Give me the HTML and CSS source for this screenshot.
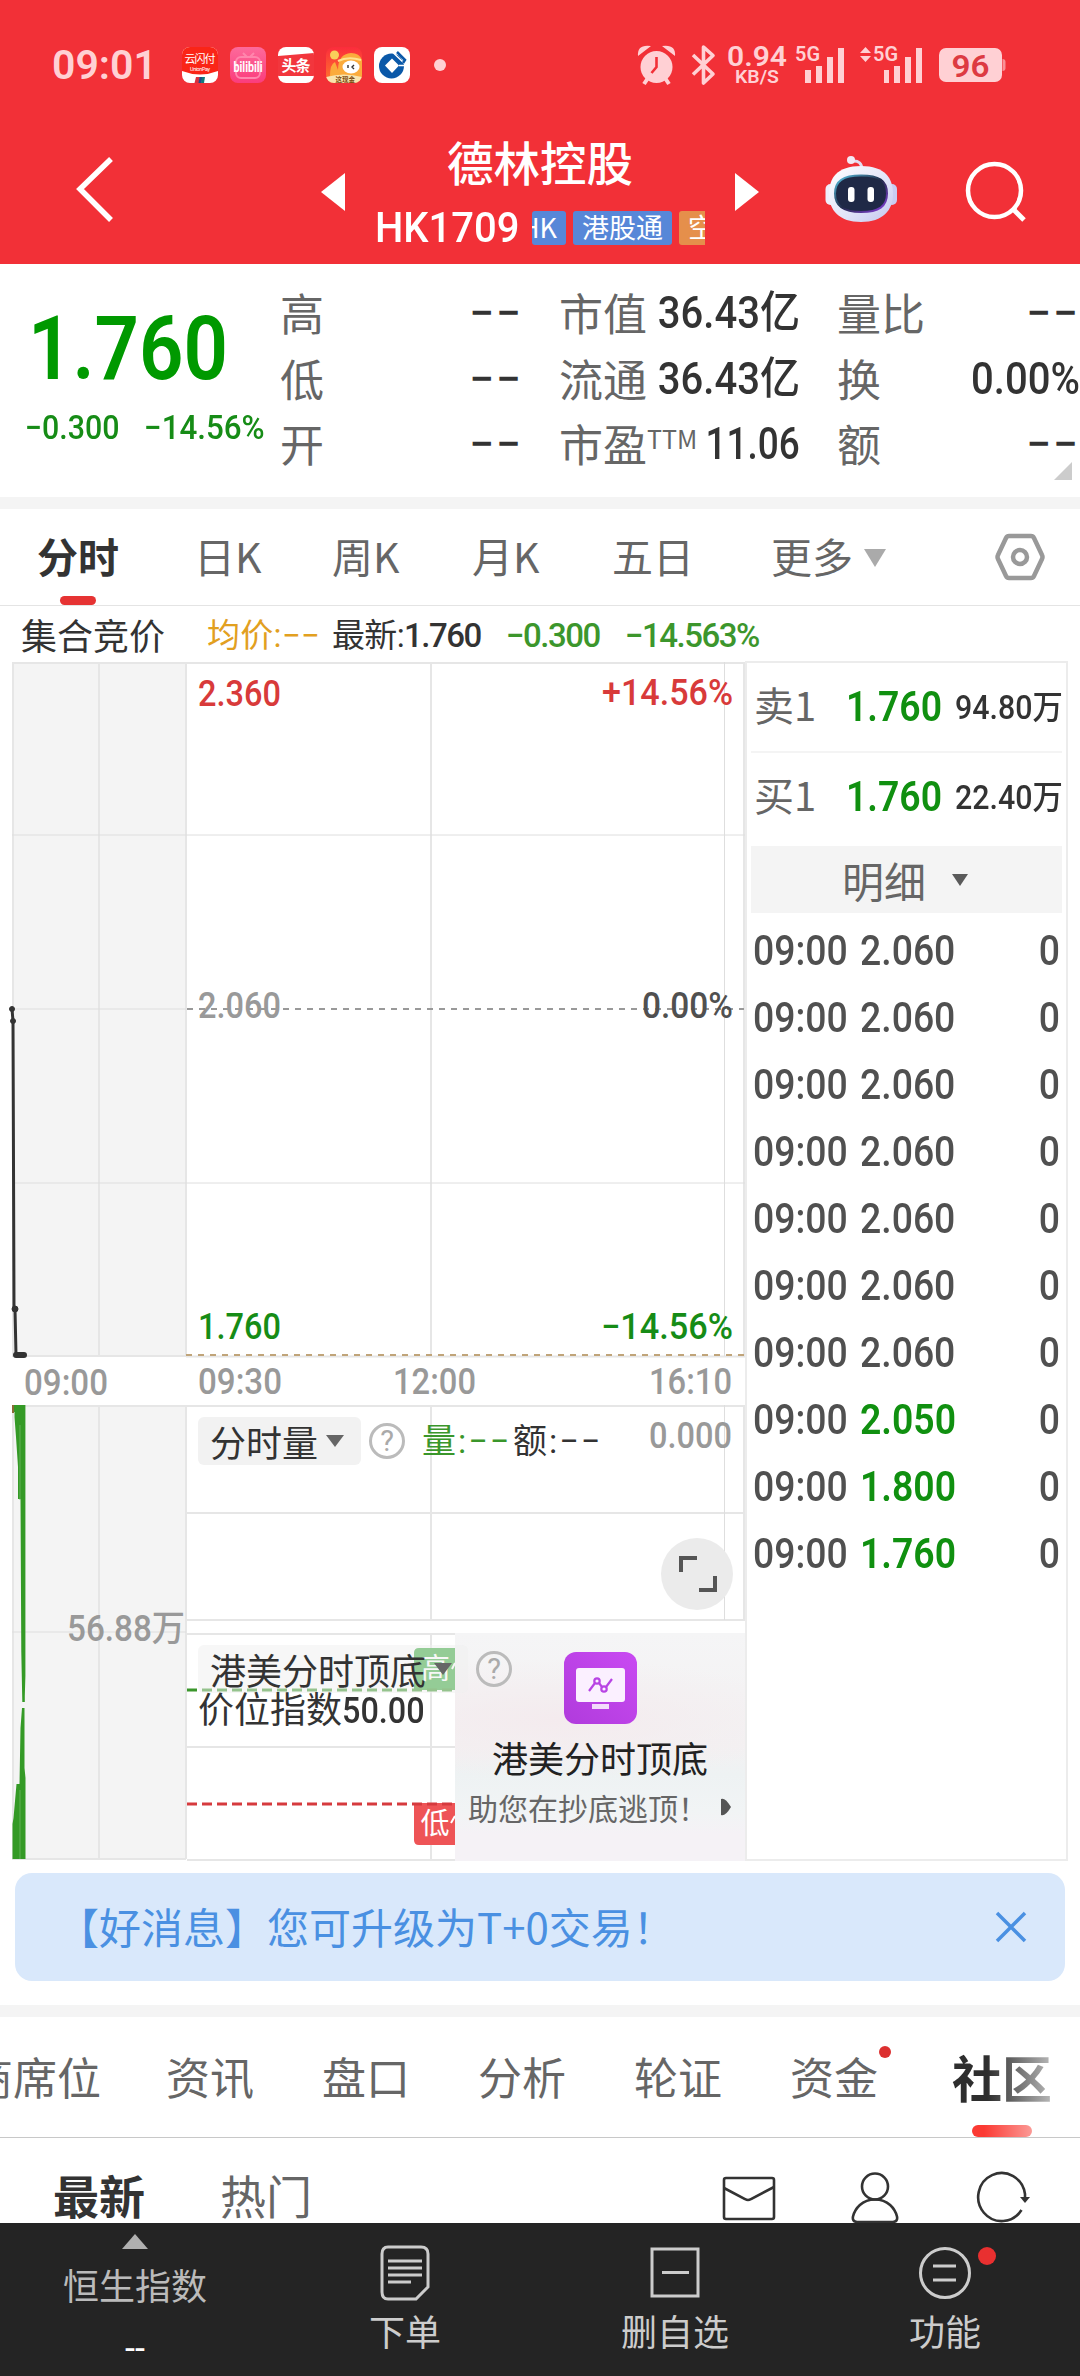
FILE: index.html
```html
<!DOCTYPE html>
<html lang="zh-CN">
<head>
<meta charset="utf-8">
<title>德林控股 HK1709</title>
<link rel="stylesheet" href="styles.css">
</head>
<body>
<div class="screen">

<header class="top">
  <div class="status">
    <span class="clock">09:01</span>
    <svg class="apps" width="272" height="40" viewBox="180 45 272 40">
      <defs>
        <clipPath id="app1"><rect x="182" y="47" width="36" height="36" rx="8"/></clipPath>
        <clipPath id="app3"><rect x="278" y="47" width="36" height="36" rx="8"/></clipPath>
        <clipPath id="app4"><rect x="326" y="47" width="36" height="36" rx="8"/></clipPath>
        <linearGradient id="pink" x1="0" y1="0" x2="0" y2="1"><stop offset="0" stop-color="#fd6a9b"/><stop offset="1" stop-color="#fb3c7c"/></linearGradient>
        <linearGradient id="orange" x1="0" y1="0" x2="0" y2="1"><stop offset="0" stop-color="#fb2c3c"/><stop offset="1" stop-color="#ff7a2a"/></linearGradient>
      </defs>
      <g clip-path="url(#app1)">
        <rect x="182" y="47" width="36" height="36" fill="#fff"/>
        <path d="M182 47h36v24q-18 7-36 0z" fill="#fa2517"/>
        <text x="184.500" y="63" class="app-cn" font-size="11" textLength="31">云闪付</text>
        <text x="190" y="70.500" class="app-en" font-size="5.500" textLength="20">UnionPay</text>
        <path d="M196 77h4l-1 6h-4.500z" fill="#d8303e"/><path d="M199.500 77h3l-1 6h-3z" fill="#224a8a"/><path d="M202 77h3l-1 6h-3z" fill="#11797a"/>
      </g>
      <rect x="230" y="47" width="36" height="36" rx="8" fill="url(#pink)"/>
      <rect x="236" y="57" width="24" height="21" rx="5" fill="none" stroke="#ff86ad" stroke-width="2"/>
      <path d="M243 53l4 4M254 53l-4 4" stroke="#ff86ad" stroke-width="2"/>
      <text x="233.500" y="72" class="app-en" font-size="15" font-weight="700" textLength="29" lengthAdjust="spacingAndGlyphs">bilibili</text>
      <g clip-path="url(#app3)">
        <rect x="278" y="47" width="36" height="36" fill="#fff"/>
        <path d="M278 56l36-3v23l-36 0z" fill="#f2363d"/>
        <text x="281.500" y="71" class="app-cn" font-size="15" textLength="29" font-weight="700">头条</text>
      </g>
      <g clip-path="url(#app4)">
        <rect x="326" y="47" width="36" height="36" fill="url(#orange)"/>
        <circle cx="334.500" cy="55" r="4.500" fill="#f9ce5a"/>
        <path d="M330 76q0-12 5-14l3 8q0-16 13-17 11 0 12 12v12h-34z" fill="#fbab3c"/>
        <path d="M338 61q10-5 23-1" fill="none" stroke="#ffe28e" stroke-width="2"/>
        <ellipse cx="351" cy="67" rx="8.500" ry="6.500" fill="#fff"/>
        <path d="M348 65v3M354 65l-2 2 2 2" stroke="#333" stroke-width="1.400" fill="none"/>
        <path d="M326 77q18-5 36 0v6h-36z" fill="#f9e4ae"/>
        <text x="335.500" y="82" font-size="6.500" font-weight="700" fill="#7a4a10">这现金</text>
      </g>
      <rect x="374" y="47" width="36" height="36" rx="8" fill="#fff"/>
      <circle cx="391.500" cy="66" r="12.500" fill="#0a58a8"/>
      <path d="M392 58.500l7 7-7 7.500-7-7.500z" fill="#fff"/>
      <path d="M393.500 53l11 10.500M399 65.500h7" stroke="#fff" stroke-width="1.600"/>
      <path d="M397 52l8 8 -2 3" fill="none" stroke="#0a58a8" stroke-width="2.500"/>
      <circle cx="440" cy="65" r="6" fill="#ffd0d4"/>
    </svg>
    <svg class="signals" width="376" height="46" viewBox="634 42 376 46" fill="#ffd0d4">
      <circle cx="656.500" cy="67" r="16"/>
      <path d="M638 56q-1-12 13-10zM675 56q1-12-13-10z"/>
      <path d="M644 84l4-6M669 84l-4-6" stroke="#ffd0d4" stroke-width="4"/>
      <path d="M656.500 57v10l-5 6" fill="none" stroke="#f23037" stroke-width="2.600"/>
      <path d="M693 55l20 19-9.500 9V47l9.500 8.500-20 19" fill="none" stroke="#ffd0d4" stroke-width="3.600" stroke-linejoin="round"/>
      <text x="727" y="66" class="sig" font-size="28" textLength="60" lengthAdjust="spacingAndGlyphs">0.94</text>
      <text x="735" y="82.500" class="sig" font-size="19" textLength="44" lengthAdjust="spacingAndGlyphs">KB/S</text>
      <text x="795" y="61" class="sig" font-size="21" textLength="25" lengthAdjust="spacingAndGlyphs">5G</text>
      <path d="M805 70h6v13h-6zM816 66h6v17h-6zM827 57h6v26h-6zM838 48h6v35h-6z"/>
      <path d="M860 53l5.500-6 5.500 6zM860 56l5.500 6 5.500-6z"/>
      <text x="873" y="61" class="sig" font-size="21" textLength="25" lengthAdjust="spacingAndGlyphs">5G</text>
      <path d="M884 70h5v13h-5zM894 66h6v17h-6zM905 57h6v26h-6zM916 48h6v35h-6z"/>
      <rect x="939" y="48" width="63" height="34" rx="7"/>
      <path d="M1002.500 59q3 0 3 3v6q0 3-3 3z" opacity=".6"/>
      <text x="951.500" y="76.500" class="sig" font-size="32" fill="#dd3a42" textLength="38" lengthAdjust="spacingAndGlyphs">96</text>
    </svg>
  </div>
  <div class="nav">
    <svg class="back" width="44" height="76" viewBox="72 151 44 76"><path d="M111 159L80 189l31 31" fill="none" stroke="#fff" stroke-width="5.500"/></svg>
    <svg class="prev" width="24" height="38" viewBox="0 0 24 38"><path d="M24 0v38L0 19z" fill="#fff"/></svg>
    <div class="title">
      <div class="name">德林控股</div>
      <div class="code-row">
        <div class="code"><span>HK1709</span></div>
        <div class="tags"><span class="tag tag-cut">HK</span><span class="tag">港股通</span><span class="tag tag-orange">空</span></div>
      </div>
    </div>
    <svg class="next" width="24" height="38" viewBox="0 0 24 38"><path d="M0 0v38l24-19z" fill="#fff"/></svg>
    <svg class="robot" width="76" height="74" viewBox="823 155 76 74">
      <defs>
        <linearGradient id="shell" x1="0" y1="0" x2="1" y2="1"><stop offset="0" stop-color="#fff"/><stop offset=".6" stop-color="#e0e2f8"/><stop offset="1" stop-color="#c3c6ee"/></linearGradient>
        <linearGradient id="rim" x1="0" y1="0" x2="1" y2="1"><stop offset="0" stop-color="#59c6e6"/><stop offset=".5" stop-color="#222b4a"/><stop offset="1" stop-color="#8b3fe0"/></linearGradient>
      </defs>
      <path d="M852 161q10-1 10 9" fill="none" stroke="#e3dcf0" stroke-width="3"/>
      <circle cx="851" cy="160" r="4" fill="#f3e9f4"/>
      <rect x="825.500" y="184" width="10" height="21" rx="5" fill="#eeeefb"/>
      <rect x="887" y="184" width="10" height="21" rx="5" fill="#c9ccf2"/>
      <path d="M861 166c24 0 32 12 32 28s-10 28-32 28-32-12-32-28 8-28 32-28z" fill="url(#shell)"/>
      <path d="M861 175.500c18 0 26 5 26 18s-8 18.500-26 18.500-26-6-26-18.500 8-18 26-18z" fill="#1f2946" stroke="url(#rim)" stroke-width="2"/>
      <rect x="848" y="187" width="6.500" height="15" rx="3" fill="#fff"/><rect x="867.500" y="187" width="6.500" height="15" rx="3" fill="#fff"/>
    </svg>
    <svg class="search" width="64" height="64" viewBox="964 160 64 64"><circle cx="994.500" cy="190.500" r="26.500" fill="none" stroke="#fff" stroke-width="4.500"/><path d="M1013 209l11 11" stroke="#fff" stroke-width="5"/></svg>
  </div>
</header>

<section class="quote">
  <div class="price-block">
    <div class="price">1.760</div>
    <div class="change"><span>−0.300</span><span>−14.56%</span></div>
  </div>
  <dl class="stats stats-a">
    <div><dt>高</dt><dd class="na">−−</dd></div><div><dt>低</dt><dd class="na">−−</dd></div><div><dt>开</dt><dd class="na">−−</dd></div>
  </dl>
  <dl class="stats stats-b">
    <div><dt>市值</dt><dd>36.43亿</dd></div><div><dt>流通</dt><dd>36.43亿</dd></div><div><dt>市盈<sup>TTM</sup></dt><dd class="pe">11.06</dd></div>
  </dl>
  <dl class="stats stats-c">
    <div><dt>量比</dt><dd class="na">−−</dd></div><div><dt>换</dt><dd>0.00%</dd></div><div><dt>额</dt><dd class="na">−−</dd></div>
  </dl>
  <i class="corner"></i>
</section>

<nav class="periods">
  <span class="p1 on">分时</span><span class="p2">日K</span><span class="p3">周K</span><span class="p4">月K</span><span class="p5">五日</span><span class="p6">更多<i class="caret"></i></span>
  <svg width="50" height="50" viewBox="995 532 50 50" fill="none" stroke="#999" stroke-width="4.500"><path d="M1009 536h22q2 0 3 2l8 17q1 2 0 4l-8 17q-1 2-3 2h-22q-2 0-3-2l-8-17q-1-2 0-4l8-17q1-2 3-2z"/><circle cx="1020" cy="557" r="7"/></svg>
</nav>

<div class="legend">
  <span class="l1">集合竞价</span><span class="l2">均价:−−</span><span class="l3"><i>最新:</i>1.760</span><span class="l4">−0.300</span><span class="l5">−14.563%</span>
</div>

<main class="market">
  <div class="chart">
    <svg class="plot" width="745" height="1201" viewBox="0 661 745 1201">
      <rect x="12" y="662" width="174" height="694" fill="#f4f4f4"/>
      <rect x="12" y="1405" width="174" height="454" fill="#f4f4f4"/>
      <g fill="none" stroke="#e6e6e6" stroke-width="2">
        <path d="M12 663h733M12 1356h174M186 1356.500h559M12 1406h733M187 1513h558M187 1620h558M187 1634h558M187 1747h558M187 1860h558M12 1859h174"/>
        <path d="M13 662v694M13 1405v454M186 662v694M186 1405v454M99 662v694M99 1405v454M431 662v694M431 1405v215M431 1633v227M744 662v694M744 1405v215"/>
        <path d="M12 835h733M12 1009h174M12 1183h733M12 1632h174M724.500 662v694M724.500 1405v215" stroke="#dedede" stroke-width="1"/>
      </g>
      <path d="M187 1009H744" stroke="#999" stroke-width="2" stroke-dasharray="6 6"/>
      <path d="M186 1355H744" stroke="#c0a479" stroke-width="2" stroke-dasharray="6 6"/>
      <g stroke="#333" fill="#333">
        <path d="M12 1009l1 12 1 288 1 0 1 46" fill="none" stroke-width="3"/>
        <circle cx="12" cy="1009" r="2.500"/><circle cx="13" cy="1021" r="2.500"/><circle cx="15" cy="1309" r="3"/>
        <path d="M16 1355h8" stroke-width="6" stroke-linecap="round"/>
      </g>
      <path d="M12.500 1405v7h2v5l1.500 20 2 30v32h2.500l.8 153 1 50h2.500v-6l.6-20V1405z" fill="#349a26"/>
      <path d="M22 1708h2.500v60l1 10v81h-13v-35l1-6 3-34h3l1-56z" fill="#349a26"/>
      <path d="M12 1405h2v8h-2z" fill="#8a6a35"/><path d="M20 1425v75M20 1790v69" stroke="#6db863" stroke-width=".8"/>
      <g class="axis">
        <text x="198" y="706" textLength="83" lengthAdjust="spacingAndGlyphs" class="red">2.360</text>
        <text x="602" y="705" textLength="131" lengthAdjust="spacingAndGlyphs" class="red">+14.56%</text>
        <text x="198" y="1018" textLength="83" lengthAdjust="spacingAndGlyphs">2.060</text>
        <text x="642" y="1018" textLength="91" lengthAdjust="spacingAndGlyphs" class="dark">0.00%</text>
        <text x="198" y="1339" textLength="83" lengthAdjust="spacingAndGlyphs" class="green">1.760</text>
        <text x="601" y="1339" textLength="132" lengthAdjust="spacingAndGlyphs" class="green">−14.56%</text>
        <text x="24" y="1394.500" textLength="84" lengthAdjust="spacingAndGlyphs">09:00</text>
        <text x="198" y="1394" textLength="84" lengthAdjust="spacingAndGlyphs">09:30</text>
        <text x="393" y="1394" textLength="83" lengthAdjust="spacingAndGlyphs">12:00</text>
        <text x="649" y="1394" textLength="83" lengthAdjust="spacingAndGlyphs">16:10</text>
        <text x="649" y="1448" textLength="83" lengthAdjust="spacingAndGlyphs">0.000</text>
        <text x="67" y="1641" textLength="118" lengthAdjust="spacingAndGlyphs">56.88万</text>
      </g>
      <path d="M414 1690v-37q0-5 5-5h36v42z" fill="#38a83c"/>
      <text x="421" y="1679" font-size="29" fill="#fff">高</text><path d="M455 1663l-3 6" stroke="#fff" stroke-width="2"/>
      <path d="M187 1690H455" stroke="#3a962b" stroke-width="3" stroke-dasharray="10 5"/>
      <path d="M414 1803h41v42h-36q-5 0-5-5z" fill="#ee5456"/>
      <path d="M187 1804H455" stroke="#d63a3e" stroke-width="3" stroke-dasharray="10 5"/>
      <text x="420.500" y="1834" font-size="29" fill="#fff">低</text><path d="M455 1816l-4 7" stroke="#fff" stroke-width="2"/>
    </svg>
    <div class="promo">
      <svg width="73" height="72" viewBox="0 0 73 72">
        <defs><linearGradient id="violet" x1="0" y1="1" x2="1" y2="0"><stop offset="0" stop-color="#b03bdc"/><stop offset="1" stop-color="#c94af2"/></linearGradient></defs>
        <rect width="73" height="72" rx="12" fill="url(#violet)"/><rect x="12" y="16" width="49" height="34" rx="3" fill="#fbf0ff"/><rect x="28" y="52" width="17" height="5" fill="#f3dcfb"/>
        <g fill="none" stroke="#b844e4" stroke-width="2.200"><path d="M25 39l6-8M35 31l3 4M42 35l6-8"/><circle cx="33" cy="29" r="2.700"/><circle cx="40" cy="37" r="2.700"/></g>
      </svg>
      <div class="promo-title">港美分时顶底</div>
      <div class="promo-sub"><span>助您在抄底逃顶！</span><svg width="10" height="18" viewBox="0 0 10 18"><path d="M0 1q4-2 10 8-6 10-10 8z" fill="#555"/></svg></div>
    </div>
    <div class="tool tool-vol">
      <span class="pill">分时量<i></i></span><span class="help">?</span><span class="vol">量:−−</span><span class="amt">额:−−</span>
    </div>
    <div class="tool tool-top"><span class="pill see">港美分时顶底<i></i></span><span class="help">?</span></div>
    <div class="index-value">价位指数<b>50.00</b></div>
    <svg class="expand" width="72" height="72" viewBox="0 0 72 72"><circle cx="36" cy="36" r="36" fill="#ebebeb"/><path d="M20 34V20h16M54 38v14H38" fill="none" stroke="#555" stroke-width="4"/></svg>
  </div>

  <aside class="book">
    <div class="level"><span class="side">卖1</span><b>1.760</b><em>94.80万</em></div>
    <div class="level"><span class="side">买1</span><b>1.760</b><em>22.40万</em></div>
    <div class="detail-head">明细<i></i></div>
    <ul class="ticks">
      <li><span>09:00</span><b>2.060</b><em>0</em></li>
      <li><span>09:00</span><b>2.060</b><em>0</em></li>
      <li><span>09:00</span><b>2.060</b><em>0</em></li>
      <li><span>09:00</span><b>2.060</b><em>0</em></li>
      <li><span>09:00</span><b>2.060</b><em>0</em></li>
      <li><span>09:00</span><b>2.060</b><em>0</em></li>
      <li><span>09:00</span><b>2.060</b><em>0</em></li>
      <li><span>09:00</span><b class="down">2.050</b><em>0</em></li>
      <li><span>09:00</span><b class="down">1.800</b><em>0</em></li>
      <li><span>09:00</span><b class="down">1.760</b><em>0</em></li>
    </ul>
  </aside>
</main>

<div class="notice"><span>【好消息】您可升级为T+0交易！</span>
  <svg width="30" height="30" viewBox="0 0 30 30"><path d="M1 1l28 28M29 1L1 29" stroke="#4a90e2" stroke-width="3.500"/></svg>
</div>

<nav class="sections">
  <span>商席位</span><span>资讯</span><span>盘口</span><span>分析</span><span>轮证</span><span class="dot">资金</span><span class="current">社区</span>
</nav>

<div class="feed-head">
  <span class="f-on">最新</span><span class="f-off">热门</span>
  <svg width="300" height="50" viewBox="720 2173 300 50" fill="none" stroke="#333" stroke-width="2.600">
    <rect x="724" y="2178" width="50" height="41" rx="2"/><path d="M724 2188l21 11q3 2 6 0l23-12"/>
    <circle cx="875" cy="2186.500" r="13"/><path d="M875 2199.500c13 0 20 9 22 17q1 5-4 5.500h-36q-5-.5-4-5.500c2-8 9-17 22-17z"/>
    <path d="M1021.500 2210A23.500 24 0 1 1 1025 2194v4"/>
    <path d="M1020 2197h10l-5 6z" fill="#333" stroke="none"/>
  </svg>
</div>

<footer class="dock">
  <div class="dock-index"><i></i><span>恒生指数</span><b>--</b></div>
  <div class="dock-item"><svg width="50" height="56" viewBox="0 0 50 56" fill="none" stroke="#ccc" stroke-width="3"><path d="M8 2h33q7 0 7 7v33L36 54H8q-6 0-6-7V9q0-7 6-7z"/><path d="M8 16h34M8 23h34M8 30h34M8 37h23"/></svg><span>下单</span></div>
  <div class="dock-item"><svg width="50" height="56" viewBox="0 0 50 56" fill="none" stroke="#ccc" stroke-width="3"><path d="M2 4h46v47H2zM12 27.500h27"/></svg><span>删自选</span></div>
  <div class="dock-item"><svg width="50" height="56" viewBox="0 0 50 56" fill="none" stroke="#ccc" stroke-width="3"><circle cx="25" cy="28" r="24.500"/><path d="M13 21h23M13 35h23"/><circle cx="67" cy="11" r="9" fill="#e93030" stroke="none"/></svg><span>功能</span></div>
</footer>
</div>
</body>
</html>
```

FILE: styles.css
```css
* { box-sizing: border-box; }
body, dl, dd, ul { margin: 0; padding: 0; }
body { background: #fff; font-family: "Noto Sans CJK SC", sans-serif; }
i, em { font-style: normal; }
svg { display: block; flex: none; overflow: visible; }
svg text { font-family: "Noto Sans CJK SC", sans-serif; }
.screen { width: 1080px; height: 2376px; overflow: hidden; display: flex; flex-direction: column; background: #fff; }
.screen > * { flex: none; }

/* status bar and title */
.top { height: 264px; background: #f23037; color: #fff; }
.status { height: 130px; display: flex; align-items: center; padding: 0 70px 0 52px; }
.clock { width: 128px; font: 600 41px/50px Roboto, sans-serif; color: #ffd0d4; }
.clock, .apps { margin-top: -1px; }
.signals { margin-left: auto; }
.app-cn { fill: #fff; }
svg .app-en { fill: #fff; font-family: Roboto, sans-serif; }
svg .sig { font-family: Roboto, sans-serif; font-weight: 600; }
.nav { height: 134px; display: flex; align-items: flex-start; }
.back { margin: 21px 0 0 72px; }
.prev { margin: 43px 0 0 205px; }
.title { width: 330px; margin-left: 32px; padding-top: 1px; }
.name { width: 330px; text-align: center; padding-right: 4px; font-size: 46.500px; line-height: 60px; font-weight: 500; }
.code-row { height: 48px; display: flex; align-items: center; margin-top: 13px; }
.code { width: 155px; font: 500 42.500px/48px Roboto, sans-serif; }
.code span { display: inline-block; transform: scaleX(.94); transform-origin: left; margin-left: -2px; }
.tags { width: 173px; height: 34px; display: flex; gap: 7px; overflow: hidden; }
.tag { flex: none; height: 34px; padding: 0 9px; border-radius: 3px; background: #5787d8; font-size: 27px; line-height: 31px; }
.tag-cut { width: 34px; display: flex; justify-content: flex-end; padding: 0 9px 0 0; overflow: hidden; }
.tag-orange { background: #e58f4b; }
.next { margin: 43px 0 0 28px; }
.robot { margin: 25px 0 0 64px; }
.search { margin: 30px 0 0 65px; }

/* quote summary */
.quote { height: 245px; display: flex; border-bottom: 12px solid #f4f4f4; position: relative; }
.price-block { width: 280px; color: #009900; font-family: Roboto, sans-serif; font-weight: 500; }
.price { width: 230px; height: 100px; margin: 35px 0 0 28px; font-size: 89px; font-weight: 600; line-height: 100px; transform: scaleX(.875); transform-origin: left; }
.change { display: flex; margin: 8px 0 0 25px; height: 40px; font-size: 33px; line-height: 42px; color: #168c16; }
.change span { flex: none; transform: scaleX(.92); transform-origin: left; white-space: nowrap; }
.change span:first-child { width: 119px; }
.change span:last-child { transform: scaleX(.95); }
.stats { padding-top: 17px; }
.stats > div { height: 65.500px; display: flex; justify-content: space-between; line-height: 62.500px; font-size: 44px; }
.stats dt { color: #666; white-space: nowrap; }
.stats dd { width: 160px; margin-left: -20px; text-align: right; white-space: nowrap; line-height: 65.500px; font-family: Roboto, "Noto Sans CJK SC", sans-serif; font-weight: 500; color: #333; transform: scaleX(.91); transform-origin: right; }
.stats .pe { width: 130px; transform: scaleX(.84); }
.stats .na { width: auto; letter-spacing: 2px; transform: none; margin-right: -3px; }
.stats sup { font-size: 25px; line-height: 0; vertical-align: 13px; }
.stats-a { width: 240px; }
.stats-b { width: 241px; margin-left: 39px; }
.stats-c { width: 243px; margin-left: 37px; }
.stats-c .na { margin-right: 0; }
.corner { position: absolute; right: 8px; bottom: 17px; border: 9px solid; border-color: transparent #ccc #ccc transparent; }

/* chart period tabs */
.periods { height: 97px; display: flex; align-items: center; border-bottom: 1px solid #e4e4e4; color: #666; font-size: 41px; }
.periods span { position: relative; flex: none; line-height: 93px; height: 96px; white-space: nowrap; }
.p1 { width: 158px; padding-left: 37px; }
.p2 { width: 138px; margin-left: 36px; }
.p3 { width: 140px; }
.p4 { width: 140px; }
.p5 { width: 159px; }
.p6 { width: 224px; }
.periods .on { font-weight: 700; color: #333; }
.on::after { content: ""; position: absolute; left: 60px; bottom: 0; width: 36px; height: 9px; border-radius: 5px; background: #e63333; }
.caret { display: inline-block; margin-left: 11px; vertical-align: 6px; border: 11px solid transparent; border-top: 18px solid #aaa; border-bottom: 0; }

/* chart legend */
.legend { height: 55px; display: flex; padding-left: 21px; font: 500 33px/60px Roboto, "Noto Sans CJK SC", sans-serif; color: #333; white-space: nowrap; letter-spacing: -.045em; }
.legend span { flex: none; }
.legend i { font-weight: 400; letter-spacing: -.02em; }
.legend .l1 { width: 186px; font: 400 36px/56px "Noto Sans CJK SC", sans-serif; letter-spacing: 0; }
.legend .l2 { width: 125px; color: #e2a01f; font-weight: 400; letter-spacing: .3px; }
.l3 { width: 174px; }
.l4 { width: 119px; color: #3c962c; }
.l5 { color: #3c962c; }

/* chart and order book */
.market { display: flex; height: 1201px; }
.chart { width: 745px; position: relative; }
.axis text { font: 500 36px Roboto, "Noto Sans CJK SC", sans-serif; fill: #999; }
.axis .red { fill: #d83a3a; }
.axis .green { fill: #168c16; }
.axis .dark { fill: #505050; }
.promo { position: absolute; left: 455px; top: 972px; width: 290px; height: 228px; display: flex; flex-direction: column; align-items: center; padding-top: 19px; background: radial-gradient(ellipse 260px 60px at 35% 38%, #f4ebee, rgba(244,235,238,0)), linear-gradient(#f5f5f6, #f3f1f2 50%, #eef2f3 62%, #f1f4f5 78%, #f5f2f6 88%); }
.promo-title { margin-top: 9px; font-size: 36px; line-height: 48px; color: #222; }
.promo-sub { width: 290px; display: flex; align-items: center; padding-left: 13px; font-size: 30px; line-height: 52px; color: #666; }
.promo-sub span { width: 253px; }
.tool { position: absolute; left: 198px; display: flex; align-items: center; height: 48px; font-size: 36px; color: #333; white-space: nowrap; }
.tool-vol { top: 756px; }
.tool-top { top: 984px; }
.pill { height: 48px; line-height: 47px; padding: 0 17px 0 12px; border-radius: 6px; background: #f2f2f2; display: flex; align-items: center; }
.pill i { margin-left: 8px; border: 9px solid transparent; border-top: 12px solid #666; border-bottom: 0; }
.see { background: rgba(240, 240, 240, .5); padding-right: 16px; }
.help { width: 36px; height: 36px; margin-left: 8px; border: 3px solid #bbb; border-radius: 50%; color: #aaa; font: 400 29px/31px Roboto, sans-serif; text-align: center; }
.vol, .amt { font: 400 34px/48px Roboto, "Noto Sans CJK SC", sans-serif; letter-spacing: 2px; }
.vol { width: 91px; margin-left: 17px; color: #3a962b; }
.index-value { position: absolute; left: 198px; top: 1022px; font-size: 36px; line-height: 48px; color: #333; white-space: nowrap; }
.index-value b { display: inline-block; font-family: Roboto, sans-serif; font-weight: 500; transform: scaleX(.9); transform-origin: left; }
.expand { position: absolute; left: 661px; top: 877px; }

.book { width: 323px; height: 1200px; border: 2px solid #ececec; padding: 0 4px; }
.level { height: 88px; margin-bottom: 2px; display: flex; padding-left: 3px; box-shadow: 0 2px #f4f4f4; }
.level > * { flex: none; }
.level + .level { box-shadow: none; }
.level .side { width: 92px; font-size: 40px; line-height: 82px; color: #666; }
.level b { width: 109px; font: 600 42px/87px Roboto, sans-serif; color: #109010; transform: scaleX(.89); transform-origin: left; }
.level em { font: 500 33px/90px Roboto, "Noto Sans CJK SC", sans-serif; color: #333; white-space: nowrap; transform: scaleX(.92); transform-origin: left; }
.detail-head { height: 67px; margin-top: 5px; background: #f4f4f4; display: flex; align-items: center; padding-left: 91px; font-size: 42px; line-height: 67px; color: #666; }
.detail-head i { margin-left: 26px; border: 8px solid transparent; border-top: 12px solid #5a5a5a; border-bottom: 0; }
.ticks { list-style: none; padding-top: 4px; }
.ticks li { height: 67px; display: flex; padding: 0 2px; font: 500 42px/67px Roboto, sans-serif; color: #505050; }
.ticks li > * { font-weight: 500; transform: scaleX(.89); transform-origin: left; }
.ticks span { width: 107px; }
.ticks li em { margin-left: auto; transform-origin: right; }
.ticks li .down { color: #109010; font-weight: 600; }

/* notice */
.notice { height: 108px; margin: 11px 15px 24px; border-radius: 17px; background: #d9e8fb; color: #4a90e2; display: flex; align-items: center; justify-content: space-between; padding: 0 39px 0 42px; font-size: 42px; line-height: 100px; }
.notice span { height: 103px; }

/* content sections */
.sections { height: 133px; border-top: 12px solid #f4f4f4; border-bottom: 1px solid #c8c8c8; display: flex; gap: 68px; font-size: 44px; line-height: 118px; color: #666; white-space: nowrap; }
.sections span { flex: none; position: relative; }
.sections span:first-child { margin: 0 -3px 0 -31px; }
.dot::after { content: ""; position: absolute; left: 89px; top: 29px; width: 12px; height: 12px; border-radius: 50%; background: #dc3030; }
.sections .current { width: 101px; margin-left: 6px; font-size: 50px; line-height: 119px; font-weight: 700; background: linear-gradient(90deg, #2e2e2e 35%, #bbb); -webkit-background-clip: text; background-clip: text; color: transparent; }
.current::after { content: ""; position: absolute; left: 20px; bottom: 0; width: 60px; height: 12px; border-radius: 6px; background: linear-gradient(90deg, #fb3a33 20%, #fb9a96); }
.feed-head { height: 85px; display: flex; overflow: hidden; font-size: 46px; line-height: 112px; color: #666; }
.f-on { margin-left: 53px; width: 167px; font-weight: 700; color: #333; }
.f-off { width: 500px; }
.feed-head svg { margin-top: 35px; }

/* bottom dock */
.dock { height: 153px; background: #242424; display: flex; color: #ccc; font-size: 36px; }
.dock > div { width: 270px; display: flex; flex-direction: column; align-items: center; }
.dock-index i { margin-top: 11px; border: 13px solid transparent; border-bottom: 15px solid #b0b0b0; border-top: 0; }
.dock-index span { line-height: 48px; margin-top: 11px; color: #bbb; }
.dock-index b { font: 400 36px/40px Roboto, sans-serif; color: #fff; margin-top: 21px; }
.dock-item svg { margin-top: 22px; }
.dock-item span { line-height: 48px; margin-top: 5px; }
```
